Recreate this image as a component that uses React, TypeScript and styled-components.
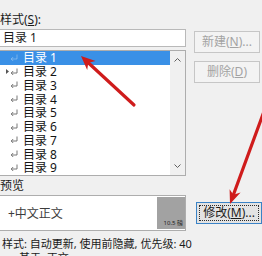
import React from "react";
import styled, { createGlobalStyle } from "styled-components";

const GlobalStyle = createGlobalStyle`
  html, body { margin: 0; padding: 0; background: #f0f0f0; }
  * { box-sizing: border-box; }
`;

const FONT = `"Noto Sans", "Noto Sans CJK SC", sans-serif`;

const Page = styled.div`
  position: relative;
  width: 262px;
  height: 256px;
  overflow: hidden;
  background: #f0f0f0;
  font-family: ${FONT};
  color: #1b1b1b;
`;

const Body = styled.div`
  display: flex;
  flex-direction: column;
  margin-left: -2px;
`;

const TopArea = styled.div`
  display: flex;
  gap: 8px;
`;

const LeftCol = styled.div`
  width: 192px;
  display: flex;
  flex-direction: column;
`;

const Label = styled.div<{ $mt: number }>`
  margin-top: ${(p) => p.$mt}px;
  height: 14px;
  line-height: 14px;
  font-size: 12px;
  padding-left: 2px;
  white-space: nowrap;
`;

const Key = styled.span`
  text-decoration: underline;
  text-underline-offset: 1px;
`;

const NameInput = styled.div`
  margin-top: 2px;
  height: 18px;
  border: 1px solid #b9b9b9;
  background: #fff;
  font-size: 12px;
  line-height: 16px;
  padding-left: 4px;
`;

const ListBox = styled.div`
  margin-top: 3px;
  display: flex;
  border: 1px solid #adadad;
  background: #fff;
`;

const Rows = styled.div`
  flex: 1;
  display: flex;
  flex-direction: column;
`;

const Row = styled.div<{ $selected?: boolean }>`
  height: 13.75px;
  display: flex;
  align-items: center;
  padding-left: 7px;
  background: ${(p) => (p.$selected ? "#3a90e6" : "transparent")};
  color: ${(p) => (p.$selected ? "#fff" : "#141414")};
  font-size: 12px;
  line-height: 13px;
  white-space: nowrap;
`;

const Expander = styled.span`
  width: 4px;
  height: 8px;
  display: flex;
  align-items: center;
`;

const ParaMark = styled.svg<{ $selected?: boolean }>`
  width: 8px;
  height: 8px;
  margin-right: 5px;
  stroke: ${(p) => (p.$selected ? "rgba(255,255,255,0.35)" : "#6a6a6a")};
  fill: none;
  stroke-width: 0.9;
`;

const RowText = styled.span`
  line-height: 13px;
`;

const ScrollBar = styled.div`
  width: 15px;
  background: #f0f0f0;
  display: flex;
  flex-direction: column;
  justify-content: space-between;
  align-items: center;
  padding: 7px 0;
`;

const ScrollArrow = styled.svg`
  width: 7px;
  height: 4px;
  fill: none;
  stroke: #5f5f5f;
  stroke-width: 1;
`;

const PreviewBox = styled.div`
  margin-top: 2px;
  height: 36px;
  display: flex;
  border: 1px solid #adadad;
  background: #fff;
`;

const PreviewText = styled.div`
  flex: 1;
  display: flex;
  align-items: center;
  padding-left: 9px;
  font-size: 12px;
  color: #3c3c3c;
`;

const SizeSwatch = styled.div`
  width: 28px;
  margin: 1px 0;
  background: #a2a2a2;
  display: flex;
  align-items: flex-end;
  justify-content: flex-end;
  padding: 0 2px 2px 0;
  font-size: 6px;
  line-height: 8px;
  color: #1e1e1e;
  white-space: nowrap;
`;

const RightCol = styled.div`
  flex: 1;
  display: flex;
  flex-direction: column;
  align-items: flex-start;
  padding-top: 31px;
  gap: 8px;
`;

const Button = styled.button<{ $default?: boolean; $mt?: string; $ml?: number }>`
  position: relative;
  width: 66px;
  height: 22px;
  flex-shrink: 0;
  margin-top: ${(p) => p.$mt ?? "0"};
  margin-left: ${(p) => p.$ml ?? 0}px;
  margin-bottom: ${(p) => (p.$default ? "7px" : "0")};
  padding: 0;
  font-family: ${FONT};
  font-size: 12px;
  line-height: 20px;
  white-space: nowrap;
  border: 1px solid ${(p) => (p.$default ? "#3a83c6" : "#c6c6c6")};
  background: ${(p) => (p.$default ? "#e3e3e3" : "#f3f3f3")};
  color: ${(p) => (p.$default ? "#1b1b1b" : "#a3a3a3")};
  &::after {
    content: "";
    display: ${(p) => (p.$default ? "block" : "none")};
    position: absolute;
    inset: 2px;
    border: 1px dotted #2b2b2b;
  }
`;

const Status = styled.div`
  margin-top: 6px;
  padding-left: 4px;
  font-size: 11px;
  line-height: 14px;
  white-space: nowrap;
  color: #1b1b1b;
`;

const StatusIndent = styled.div`
  padding-left: 17px;
`;

const Overlay = styled.svg`
  position: absolute;
  left: 0;
  top: 0;
  width: 262px;
  height: 256px;
  pointer-events: none;
`;

const items = ["目录 1", "目录 2", "目录 3", "目录 4", "目录 5", "目录 6", "目录 7", "目录 8", "目录 9"];

export default function App() {
  return (
    <Page>
      <GlobalStyle />
      <Body>
        <TopArea>
          <LeftCol>
            <Label $mt={13}>
              样式(<Key>S</Key>):
            </Label>
            <NameInput>目录 1</NameInput>
            <ListBox>
              <Rows>
                {items.map((t, i) => (
                  <Row key={t} $selected={i === 0}>
                    <Expander>
                      {i === 1 && (
                        <svg width="3" height="5" viewBox="0 0 3 5">
                          <path d="M0 0 L3 2.5 L0 5 Z" fill="#555" />
                        </svg>
                      )}
                    </Expander>
                    <ParaMark viewBox="0 0 8 8" $selected={i === 0}>
                      <path d="M7 0.5 V5 H1.2" />
                      <path d="M3.2 3 L1.2 5 L3.2 7" />
                    </ParaMark>
                    <RowText>{t}</RowText>
                  </Row>
                ))}
              </Rows>
              <ScrollBar>
                <ScrollArrow viewBox="0 0 7 4">
                  <path d="M0.5 3.5 L3.5 0.5 L6.5 3.5" />
                </ScrollArrow>
                <ScrollArrow viewBox="0 0 7 4">
                  <path d="M0.5 0.5 L3.5 3.5 L6.5 0.5" />
                </ScrollArrow>
              </ScrollBar>
            </ListBox>
            <Label $mt={3}>预览</Label>
            <PreviewBox>
              <PreviewText>+中文正文</PreviewText>
              <SizeSwatch>10.5 磅</SizeSwatch>
            </PreviewBox>
          </LeftCol>
          <RightCol>
            <Button disabled>
              新建(<Key>N</Key>)...
            </Button>
            <Button disabled>
              删除(<Key>D</Key>)
            </Button>
            <Button $default $mt="auto" $ml={2}>
              修改(<Key>M</Key>)...
            </Button>
          </RightCol>
        </TopArea>
        <Status>
          样式: 自动更新, 使用前隐藏, 优先级: 40
          <StatusIndent>基于: 正文</StatusIndent>
        </Status>
      </Body>
      <Overlay viewBox="0 0 262 256">
        <line x1="134" y1="105" x2="88" y2="62.5" stroke="#cf1c1c" strokeWidth="3.2" strokeLinecap="round" />
        <polygon points="81,56 95.6,61 88.3,62.8 87.2,70" fill="#cf1c1c" />
        <line x1="266" y1="106" x2="233.5" y2="194.5" stroke="#cf1c1c" strokeWidth="3.2" strokeLinecap="round" />
        <polygon points="230,204 229.6,189.2 233.4,194.8 240.6,192.4" fill="#cf1c1c" />
      </Overlay>
    </Page>
  );
}
